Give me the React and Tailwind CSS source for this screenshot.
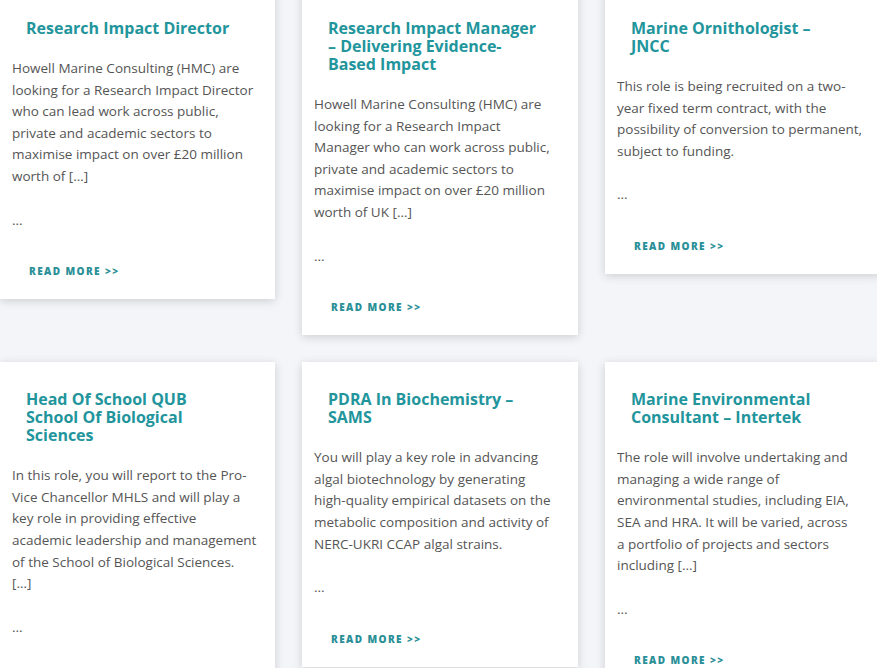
import React from 'react';

// excerpt lines kept as they break on the live page
const jobs = [
  {
    title: 'Research Impact Director',
    lines: [
      'Howell Marine Consulting (HMC) are',
      'looking for a Research Impact Director',
      'who can lead work across public,',
      'private and academic sectors to',
      'maximise impact on over £20 million',
      'worth of […]',
    ],
  },
  {
    title: 'Research Impact Manager – Delivering Evidence-Based Impact',
    lines: [
      'Howell Marine Consulting (HMC) are',
      'looking for a Research Impact',
      'Manager who can work across public,',
      'private and academic sectors to',
      'maximise impact on over £20 million',
      'worth of UK […]',
    ],
  },
  {
    title: 'Marine Ornithologist – JNCC',
    lines: [
      'This role is being recruited on a two-',
      'year fixed term contract, with the',
      'possibility of conversion to permanent,',
      'subject to funding.',
    ],
  },
  {
    title: 'Head Of School QUB School Of Biological Sciences',
    lines: [
      'In this role, you will report to the Pro-',
      'Vice Chancellor MHLS and will play a',
      'key role in providing effective',
      'academic leadership and management',
      'of the School of Biological Sciences.',
      '[…]',
    ],
  },
  {
    title: 'PDRA In Biochemistry – SAMS',
    lines: [
      'You will play a key role in advancing',
      'algal biotechnology by generating',
      'high-quality empirical datasets on the',
      'metabolic composition and activity of',
      'NERC-UKRI CCAP algal strains.',
    ],
  },
  {
    title: 'Marine Environmental Consultant – Intertek',
    lines: [
      'The role will involve undertaking and',
      'managing a wide range of',
      'environmental studies, including EIA,',
      'SEA and HRA. It will be varied, across',
      'a portfolio of projects and sectors',
      'including […]',
    ],
  },
];

const JobCard = ({ job }) => (
  <div className="bg-white px-[12px] pt-[28px] pb-[21px] shadow-[0_2px_9px_rgba(0,0,0,0.16)]">
    <h3 className="pl-[14px] pr-[22px] text-[16px] leading-[18px] font-bold text-[#22959c]">
      {job.title}
    </h3>
    <p className="mt-[21px] text-[13.5px] leading-[21.6px] text-[#555555]">
      {job.lines.map((line, i) => (
        <span key={i} className="block whitespace-nowrap">
          {line}
        </span>
      ))}
    </p>
    <p className="mt-[22px] text-[13.5px] leading-[21.6px] text-[#555555]">...</p>
    <a
      href="#"
      className="mt-[33px] ml-[17px] block text-[10px] leading-[14px] font-extrabold tracking-[1.4px] text-[#2a8f97]"
    >
      READ MORE &gt;&gt;
    </a>
  </div>
);

export default function App() {
  return (
    <div
      className="h-[668px] w-[877px] overflow-hidden bg-[#f4f5f8]"
      style={{ fontFamily: '"Open Sans", "Noto Sans", sans-serif' }}
    >
      <div className="mt-[-9px] grid w-[881px] grid-cols-[275px_276px_276px] items-start gap-[27px]">
        {jobs.map((job) => (
          <JobCard key={job.title} job={job} />
        ))}
      </div>
    </div>
  );
}
